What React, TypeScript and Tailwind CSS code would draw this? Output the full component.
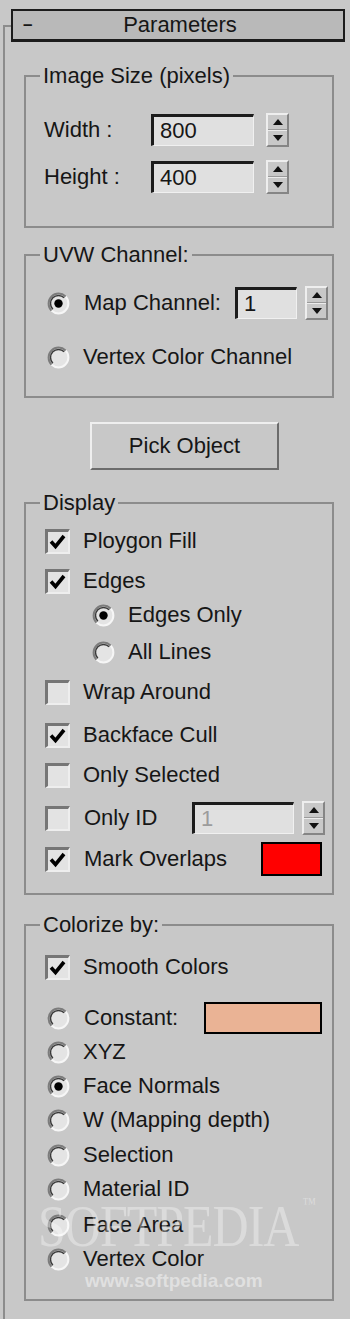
import React from "react";

type WithChildren = { className?: string; children?: React.ReactNode };

function Row({ className = "", children }: WithChildren) {
  return <div className={`flex h-[34px] items-center ${className}`}>{children}</div>;
}

function Group({ title, className = "", children }: WithChildren & { title: string }) {
  return (
    <fieldset
      className={`ml-[13px] w-[310px] shrink-0 border-2 border-[#8c8c8c] pl-[14px] pr-[4px] ${className}`}
    >
      <legend className="px-[3px] leading-[26px]">{title}</legend>
      <div className="flex flex-col">{children}</div>
    </fieldset>
  );
}

function Spinner({ className = "" }: { className?: string }) {
  return (
    <div
      className={`flex h-[34px] w-[23px] shrink-0 flex-col border-2 border-t-[#eeeeee] border-l-[#eeeeee] border-r-[#858585] border-b-[#858585] ${className}`}
    >
      <div className="flex flex-1 items-center justify-center border-b border-[#9a9a9a]">
        <svg width="10" height="6" viewBox="0 0 10 6">
          <path d="M5 0 L10 6 L0 6 Z" fill="#111" />
        </svg>
      </div>
      <div className="flex flex-1 items-center justify-center border-t border-[#ececec]">
        <svg width="10" height="6" viewBox="0 0 10 6">
          <path d="M0 0 L10 0 L5 6 Z" fill="#111" />
        </svg>
      </div>
    </div>
  );
}

function Field({
  value,
  className = "",
  disabled = false,
}: {
  value: string;
  className?: string;
  disabled?: boolean;
}) {
  return (
    <div
      className={`h-[32px] shrink-0 border-t-[3px] border-l-[3px] border-r border-b border-t-[#1c1c1c] border-l-[#1c1c1c] border-r-[#f0f0f0] border-b-[#f0f0f0] bg-[#e0e0e0] pl-[6px] leading-[27px] ${
        disabled ? "text-[#9c9c9c]" : ""
      } ${className}`}
    >
      {value}
    </div>
  );
}

function CheckBox({ checked, className = "" }: { checked?: boolean; className?: string }) {
  return (
    <div
      className={`flex h-[25px] w-[25px] shrink-0 items-center justify-center border-t-[3px] border-l-[3px] border-r-2 border-b-2 border-t-[#767676] border-l-[#767676] border-r-[#eeeeee] border-b-[#eeeeee] bg-[#e3e3e3] ${className}`}
    >
      {checked && (
        <svg width="18" height="18" viewBox="0 0 18 18">
          <polyline points="2,8.5 6.5,13.5 15,3" fill="none" stroke="#000" strokeWidth="3.6" />
        </svg>
      )}
    </div>
  );
}

function Radio({ checked, className = "" }: { checked?: boolean; className?: string }) {
  return (
    <svg width="23" height="23" viewBox="0 0 23 23" className={`shrink-0 ${className}`}>
      <circle cx="11.5" cy="11.5" r="10" fill="#e4e4e4" />
      <path d="M18.57 4.43 A10 10 0 0 1 4.43 18.57" fill="none" stroke="#f6f6f6" strokeWidth="2" />
      <path d="M4.43 18.57 A10 10 0 0 1 18.57 4.43" fill="none" stroke="#7c7c7c" strokeWidth="2" />
      <path d="M5.84 17.16 A8 8 0 0 1 17.16 5.84" fill="none" stroke="#3a3a3a" strokeWidth="1.5" />
      {checked && <circle cx="11.5" cy="11.5" r="4.2" fill="#000" />}
    </svg>
  );
}

function CheckRow({
  label,
  checked,
  className = "",
  children,
}: WithChildren & { label: string; checked?: boolean }) {
  return (
    <Row className={className}>
      <CheckBox checked={checked} className="ml-[5px]" />
      <span className="ml-[13px] whitespace-nowrap">{label}</span>
      {children}
    </Row>
  );
}

function RadioRow({
  label,
  checked,
  className = "",
  indent = "ml-[7px]",
}: {
  label: string;
  checked?: boolean;
  className?: string;
  indent?: string;
}) {
  return (
    <Row className={className}>
      <Radio checked={checked} className={indent} />
      <span className="ml-[13px] whitespace-nowrap">{label}</span>
    </Row>
  );
}

export default function App() {
  return (
    <div className="relative flex min-h-screen overflow-hidden bg-[#c8c8c8] pl-[3px] font-['Liberation_Sans',Arial,sans-serif] text-[22px] leading-[26px] text-[#161616]">
      {/* rollout left groove */}
      <div className="mt-[25px] w-[8px] shrink-0 border-l-2 border-t-2 border-[#8c8c8c]" />

      <div className="flex w-[334px] shrink-0 flex-col pt-[9px]">
        {/* Title bar */}
        <div className="flex h-[33px] shrink-0 items-center border-2 border-b-[3px] border-[#1c1c1c] bg-[#b9b9b9]">
          <span className="w-[30px] pl-[10px] text-[17px] font-bold">–</span>
          <span className="flex-1 text-center">Parameters</span>
          <span className="w-[26px]" />
        </div>

        {/* Image Size */}
        <Group title="Image Size (pixels)" className="mt-[21px] pt-[24px] pb-[33px]">
          <div className="flex h-[33px] items-center">
            <span className="ml-[4px] w-[107px]">Width :</span>
            <Field value="800" className="w-[103px]" />
            <Spinner className="ml-[12px]" />
          </div>
          <div className="mt-[14px] flex h-[33px] items-center">
            <span className="ml-[4px] w-[107px]">Height :</span>
            <Field value="400" className="w-[103px]" />
            <Spinner className="ml-[12px]" />
          </div>
        </Group>

        {/* UVW Channel */}
        <Group title="UVW Channel:" className="mt-[14px] pt-[18px] pb-[22px]">
          <Row>
            <Radio checked className="ml-[7px]" />
            <span className="ml-[14px] w-[151px] whitespace-nowrap">Map Channel:</span>
            <Field value="1" className="w-[62px]" />
            <Spinner className="ml-[8px] w-[22px]" />
          </Row>
          <RadioRow label="Vertex Color Channel" className="mt-[20px]" />
        </Group>

        {/* Pick Object */}
        <button className="ml-[79px] mt-[24px] h-[48px] w-[189px] shrink-0 border-2 border-t-[#efefef] border-l-[#efefef] border-r-[#6c6c6c] border-b-[#6c6c6c] bg-[#c8c8c8] text-center leading-[26px]">
          Pick Object
        </button>

        {/* Display */}
        <Group title="Display" className="mt-[20px] pt-[8px] pb-[17px]">
          <CheckRow label="Ploygon Fill" checked />
          <CheckRow label="Edges" checked className="mt-[6px]" />
          <RadioRow label="Edges Only" checked indent="ml-[52px]" />
          <RadioRow label="All Lines" indent="ml-[52px]" className="mt-[3px]" />
          <CheckRow label="Wrap Around" className="mt-[6px]" />
          <CheckRow label="Backface Cull" checked className="mt-[9px]" />
          <CheckRow label="Only Selected" className="mt-[6px]" />
          <Row className="mt-[9px]">
            <CheckBox className="ml-[5px]" />
            <span className="ml-[14px] w-[108px] whitespace-nowrap">Only ID</span>
            <Field value="1" disabled className="w-[102px]" />
            <Spinner className="ml-[8px] w-[22px]" />
          </Row>
          <Row className="mt-[7px]">
            <CheckBox checked className="ml-[5px]" />
            <span className="ml-[14px] w-[177px] whitespace-nowrap">Mark Overlaps</span>
            <div className="h-[34px] w-[61px] shrink-0 border-2 border-black bg-[#ff0000]" />
          </Row>
        </Group>

        {/* Colorize by */}
        <Group title="Colorize by:" className="mt-[17px] pt-[12px] pb-[23px]">
          <CheckRow label="Smooth Colors" checked />
          <Row className="mt-[17px]">
            <Radio className="ml-[7px]" />
            <span className="ml-[14px] w-[120px] whitespace-nowrap">Constant:</span>
            <div className="h-[32px] w-[118px] shrink-0 border-2 border-black bg-[#eab395]" />
          </Row>
          <RadioRow label="XYZ" />
          <RadioRow label="Face Normals" checked />
          <RadioRow label="W (Mapping depth)" />
          <RadioRow label="Selection" className="mt-[1px]" />
          <RadioRow label="Material ID" />
          <RadioRow label="Face Area" className="mt-[2px]" />
          <RadioRow label="Vertex Color" />
        </Group>
      </div>

      {/* watermark overlay */}
      <div className="pointer-events-none absolute left-[38px] top-[1196px] origin-top scale-y-120 whitespace-nowrap font-['Liberation_Serif',serif] text-[50px] leading-[50px] tracking-[-1px] text-white/35">
        SOFTPEDIA<span className="ml-[4px] align-top text-[14px] leading-[14px]">™</span>
      </div>
      <div className="pointer-events-none absolute left-[85px] top-[1270px] whitespace-nowrap text-[19px] font-bold leading-[22px] text-white/45">
        www.softpedia.com
      </div>
    </div>
  );
}
